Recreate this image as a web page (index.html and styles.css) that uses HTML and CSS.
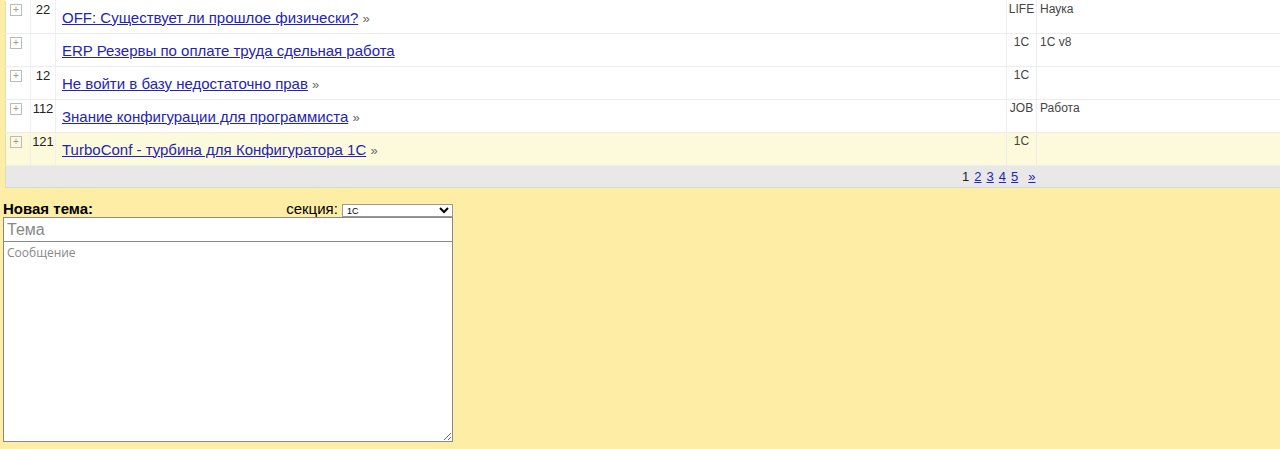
FILE: index.html
```html
<!DOCTYPE html>
<html lang="ru">
<head>
    <meta charset="UTF-8">
    <title>Форум</title>
    <link rel="stylesheet" href="styles.css">
</head>
<body>

<table class="topics">
    <tbody>
        <tr>
            <td class="exp"><span class="plus">+</span></td>
            <td class="num">22</td>
            <td class="title"><a href="#">OFF: Существует ли прошлое физически?</a> <span class="more">»</span></td>
            <td class="sec">LIFE</td>
            <td class="cat">Наука</td>
        </tr>
        <tr>
            <td class="exp"><span class="plus">+</span></td>
            <td class="num"></td>
            <td class="title"><a href="#">ERP Резервы по оплате труда сдельная работа</a></td>
            <td class="sec">1C</td>
            <td class="cat">1C v8</td>
        </tr>
        <tr>
            <td class="exp"><span class="plus">+</span></td>
            <td class="num">12</td>
            <td class="title"><a href="#">Не войти в базу недостаточно прав</a> <span class="more">»</span></td>
            <td class="sec">1C</td>
            <td class="cat"></td>
        </tr>
        <tr>
            <td class="exp"><span class="plus">+</span></td>
            <td class="num">112</td>
            <td class="title"><a href="#">Знание конфигурации для программиста</a> <span class="more">»</span></td>
            <td class="sec">JOB</td>
            <td class="cat">Работа</td>
        </tr>
        <tr class="hl">
            <td class="exp"><span class="plus">+</span></td>
            <td class="num">121</td>
            <td class="title"><a href="#">TurboConf - турбина для Конфигуратора 1С</a> <span class="more">»</span></td>
            <td class="sec">1C</td>
            <td class="cat"></td>
        </tr>
        <tr class="pager">
            <td colspan="4"><span>1</span><a href="#">2</a><a href="#">3</a><a href="#">4</a><a href="#">5</a><a href="#" class="next">»</a></td>
            <td></td>
        </tr>
    </tbody>
</table>

<form class="new-topic">
    <div class="head">
        <b>Новая тема:</b>
        <label>секция: <select><option>1C</option><option>IT</option><option>LIFE</option><option>JOB</option></select></label>
    </div>
    <input type="text" class="subject" placeholder="Тема">
    <textarea class="message" placeholder="Сообщение"></textarea>
</form>

</body>
</html>
```

FILE: styles.css
```css
body {
    margin: 0 0 0 3px;
    background-color: #fdeda5;
    font-family: "Liberation Sans", Arial, sans-serif;
    color: #000;
}

.topics {
    margin-left: 2px;
    width: calc(100% - 2px);
    border-collapse: collapse;
    border-top: 1px solid #fff;
    border-left: 1px solid #e0dcc0;
}

.topics td {
    padding: 0;
    border-bottom: 1px solid #ececec;
    background-color: #fff;
    height: 32px;
}

.topics .hl td {
    background-color: #fdfadc;
}

.exp {
    width: 24px;
    vertical-align: top;
    border-right: 1px solid #f0f0f0;
}

.plus {
    display: block;
    width: 10px;
    height: 10px;
    margin: 3px 0 0 4px;
    border: 1px solid #bbb;
    color: #999;
    font-size: 10px;
    line-height: 10px;
    text-align: center;
}

.num {
    width: 24px;
    vertical-align: top;
    text-align: center;
    font-size: 13px;
    line-height: 17px;
    color: #222;
    border-right: 1px solid #f0f0f0;
}

.title {
    padding-left: 6px !important;
    vertical-align: middle;
    font-size: 15px;
}

.title a {
    color: #2424b4;
}

.more {
    color: #666;
    font-size: 13px;
}

.sec {
    width: 29px;
    vertical-align: top;
    text-align: center;
    font-size: 12px;
    line-height: 17px;
    color: #444;
    border-left: 1px solid #ececec;
    border-right: 1px solid #ececec;
}

.cat {
    width: 240px;
    padding-left: 3px !important;
    vertical-align: top;
    font-size: 12px;
    line-height: 17px;
    color: #444;
}

.topics .pager td {
    height: 21px;
    background-color: #e8e8e8;
    border-top: 1px solid #d4d4d4;
    border-bottom: 1px solid #d8d8d8;
    text-align: right;
    font-size: 13px;
    color: #222;
    padding-right: 1px;
}

.pager a {
    margin-left: 5px;
    color: #2424b4;
}

.pager .next {
    margin-left: 10px;
}

.new-topic {
    width: 450px;
    margin-top: 13px;
}

.head {
    display: flex;
    justify-content: space-between;
    align-items: flex-end;
    font-size: 15px;
    line-height: 16px;
}

.head label {
    font-size: 15px;
}

.head select {
    width: 111px;
    height: 13px;
    padding: 0;
    font-size: 9px;
    font-family: "Liberation Sans", Arial, sans-serif;
    border: 1px solid #999;
    background-color: #fff;
    vertical-align: bottom;
}

.subject {
    display: block;
    box-sizing: border-box;
    width: 450px;
    height: 25px;
    margin: 0;
    padding: 0 3px;
    border: 1px solid #888;
    font-size: 16px;
    font-family: "Liberation Sans", Arial, sans-serif;
}

.subject::placeholder {
    color: #888;
}

.message {
    display: block;
    box-sizing: border-box;
    width: 450px;
    height: 200px;
    margin: 0;
    padding: 2px 3px;
    border: 1px solid #888;
    border-top: 0;
    font-size: 12px;
    font-family: "Open Sans", sans-serif;
}

.message::placeholder {
    color: #888;
}
```
